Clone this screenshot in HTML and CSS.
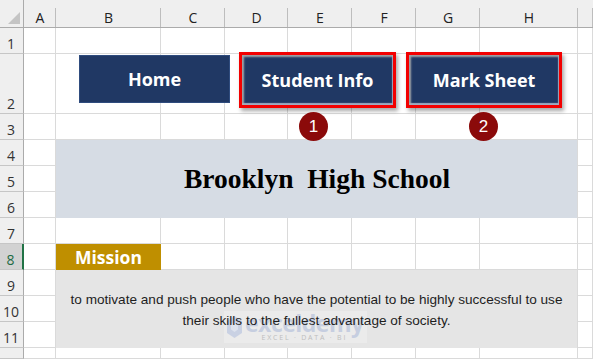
FILE: index.html
```html
<!DOCTYPE html>
<html>
<head>
<meta charset="utf-8">
<link rel="stylesheet" href="styles.css">
</head>
<body>
<div class="page">
  <div class="sheet">
    <!-- column headers -->
    <div class="corner"><span class="tri"></span></div>
    <div class="ch">A</div><div class="ch">B</div><div class="ch">C</div><div class="ch">D</div>
    <div class="ch">E</div><div class="ch">F</div><div class="ch">G</div><div class="ch wide">H</div><div class="ch"></div>

    <!-- merged blocks -->
    <div class="title">Brooklyn  High School</div>
    <div class="mission">Mission</div>
    <div class="statement">
      <div class="watermark">
        <svg class="wm-icon" width="17" height="24" viewBox="0 0 17 24">
          <path d="M8.5 1 L16 6 L16 18 L8.5 23 L1 18 L1 6 Z" fill="#c9d1e3"/>
          <path d="M8.5 7 L12 9.5 L12 14.5 L8.5 17 L5 14.5 L5 9.5 Z" fill="#dde3ee"/>
        </svg>
        <div class="wm-text">
          <span class="wm-name">exceldemy</span>
          <span class="wm-sub">EXCEL · DATA · BI</span>
        </div>
      </div>
      <p class="statement-text">to motivate and push people who have the potential to be highly successful to use<br>their skills to the fullest advantage of society.</p>
    </div>

    <!-- row 1 -->
    <div class="rh">1</div>
    <div class="c"></div><div class="c"></div><div class="c"></div><div class="c"></div><div class="c"></div><div class="c"></div><div class="c"></div><div class="c"></div><div class="c"></div>
    <!-- row 2 -->
    <div class="rh">2</div>
    <div class="c"></div><div class="c"></div><div class="c"></div><div class="c"></div><div class="c"></div><div class="c"></div><div class="c"></div><div class="c"></div><div class="c"></div>
    <!-- row 3 -->
    <div class="rh">3</div>
    <div class="c"></div><div class="c"></div><div class="c"></div><div class="c"></div><div class="c"></div><div class="c"></div><div class="c"></div><div class="c"></div><div class="c"></div>
    <!-- rows 4-6 -->
    <div class="rh">4</div><div class="c"></div><div class="c"></div>
    <div class="rh">5</div><div class="c"></div><div class="c"></div>
    <div class="rh">6</div><div class="c"></div><div class="c"></div>
    <!-- row 7 -->
    <div class="rh">7</div>
    <div class="c"></div><div class="c"></div><div class="c"></div><div class="c"></div><div class="c"></div><div class="c"></div><div class="c"></div><div class="c"></div><div class="c"></div>
    <!-- row 8 -->
    <div class="rh sel">8</div>
    <div class="c"></div><div class="c"></div><div class="c"></div><div class="c"></div><div class="c"></div><div class="c"></div><div class="c"></div><div class="c"></div>
    <!-- rows 9-11 -->
    <div class="rh">9</div><div class="c"></div><div class="c"></div>
    <div class="rh">10</div><div class="c"></div><div class="c"></div>
    <div class="rh">11</div><div class="c"></div><div class="c"></div>
    <!-- row 12 -->
    <div class="rh"></div>
    <div class="c"></div><div class="c"></div><div class="c"></div><div class="c"></div><div class="c"></div><div class="c"></div><div class="c"></div><div class="c"></div><div class="c"></div>
  </div>

  <!-- floating shapes over the sheet -->
  <div class="btn home">Home</div>
  <div class="frame frame-info"><div class="btn inner">Student Info</div></div>
  <div class="frame frame-mark"><div class="btn inner">Mark Sheet</div></div>
  <div class="badge badge-1">1</div>
  <div class="badge badge-2">2</div>
</div>
</body>
</html>
```

FILE: styles.css
```css
html, body {
  margin: 0;
  padding: 0;
  background: #ffffff;
  overflow: hidden;
}

.page {
  position: relative;
  width: 593px;
  height: 359px;
  overflow: hidden;
  font-family: "Open Sans", "Liberation Sans", sans-serif;
}

.sheet {
  display: grid;
  grid-template-columns: 24px 32px 105px 64px 63px 64px 64px 64px 98px 15px;
  grid-template-rows: 28px 26px 60px 26px repeat(8, 26px) 11px;
  width: 593px;
}

.corner {
  position: relative;
  background: #efefef;
  border-right: 1px solid #ababab;
  border-bottom: 1px solid #ababab;
}
.tri {
  position: absolute;
  right: 3px;
  bottom: 3px;
  width: 12px;
  height: 12px;
  background: #c4c4c4;
  clip-path: polygon(100% 0, 100% 100%, 0 100%);
}

.ch {
  background: linear-gradient(#bdbdbd, #bdbdbd) right bottom / 1px 19px no-repeat, #efefef;
  border-bottom: 1px solid #ababab;
  font-size: 14px;
  line-height: 18px;
  padding-top: 9px;
  text-align: center;
  color: #222222;
}

.rh {
  background: #efefef;
  border-right: 1px solid #ababab;
  border-bottom: 1px solid #c6c6c6;
  font-size: 14px;
  line-height: 16px;
  color: #333333;
  display: flex;
  align-items: flex-end;
  justify-content: center;
  padding-bottom: 1px;
  padding-right: 1px;
  box-sizing: border-box;
}
.rh.sel {
  background: #d2d2d2;
  color: #1d6b43;
  border-right: 2px solid #217346;
}

.c {
  border-right: 1px solid #dadada;
  border-bottom: 1px solid #dadada;
}

.title {
  grid-column: 3 / 10;
  grid-row: 5 / 8;
  background: #d6dce4;
  display: flex;
  align-items: center;
  justify-content: center;
  white-space: pre;
  font-family: "Liberation Serif", serif;
  font-weight: bold;
  font-size: 27.5px;
  color: #000000;
  padding-left: 1px;
  border-right: 1px solid #dadada;
}

.mission {
  grid-column: 3;
  grid-row: 9;
  background: #bf8f00;
  color: #ffffff;
  font-weight: bold;
  font-size: 17.5px;
  display: flex;
  align-items: center;
  justify-content: center;
  line-height: 26px;
}

.statement {
  grid-column: 3 / 10;
  grid-row: 10 / 13;
  position: relative;
  background: #e5e5e5;
  display: flex;
  align-items: center;
  justify-content: center;
  border-right: 1px solid #dadada;
  padding-top: 1px;
  box-sizing: border-box;
}
.statement-text {
  position: relative;
  z-index: 1;
  margin: 0;
  text-align: center;
  font-family: "Liberation Sans", Arial, sans-serif;
  font-size: 13.6px;
  line-height: 21px;
  color: #1e1e1e;
}

.btn {
  background: #203864;
  color: #ffffff;
  font-weight: bold;
  font-size: 18px;
  display: flex;
  align-items: center;
  justify-content: center;
  box-sizing: border-box;
}

.home {
  position: absolute;
  left: 79px;
  top: 55px;
  width: 151px;
  height: 48px;
  border: 1px solid #2f4c7e;
}

.frame {
  position: absolute;
  top: 52px;
  height: 56px;
  border: 3px solid #f20000;
  box-sizing: border-box;
  box-shadow: 2px 3px 4px rgba(0, 0, 0, 0.35);
}
.frame-info { left: 239px; width: 157px; }
.frame-mark { left: 406px; width: 156px; }

.inner {
  width: 100%;
  height: 100%;
  box-shadow: inset 2px 2px 2px rgba(175, 175, 175, 0.9), inset -1px -2px 1px rgba(190, 200, 215, 0.8);
}

.badge {
  position: absolute;
  top: 112px;
  width: 29px;
  height: 29px;
  border-radius: 50%;
  background: #8b0a0a;
  color: #ffffff;
  font-family: "Liberation Sans", Arial, sans-serif;
  font-size: 17px;
  line-height: 29px;
  text-align: center;
}
.badge-1 { left: 299px; }
.badge-2 { left: 469px; }

.watermark {
  position: absolute;
  left: 168px;
  top: 41px;
  width: 143px;
  height: 32px;
  display: flex;
  align-items: center;
  gap: 2px;
  background: #ebebeb;
  padding-left: 2px;
  box-sizing: border-box;
}
.wm-text {
  display: flex;
  flex-direction: column;
  align-items: center;
  line-height: 1;
}
.wm-name {
  font-family: "Open Sans", sans-serif;
  font-weight: bold;
  font-size: 23px;
  color: #c6cee0;
  letter-spacing: -0.5px;
  line-height: 20px;
}
.wm-sub {
  font-family: "Open Sans", sans-serif;
  font-size: 7px;
  letter-spacing: 1.8px;
  color: #bdbdbd;
  line-height: 9px;
}
```
